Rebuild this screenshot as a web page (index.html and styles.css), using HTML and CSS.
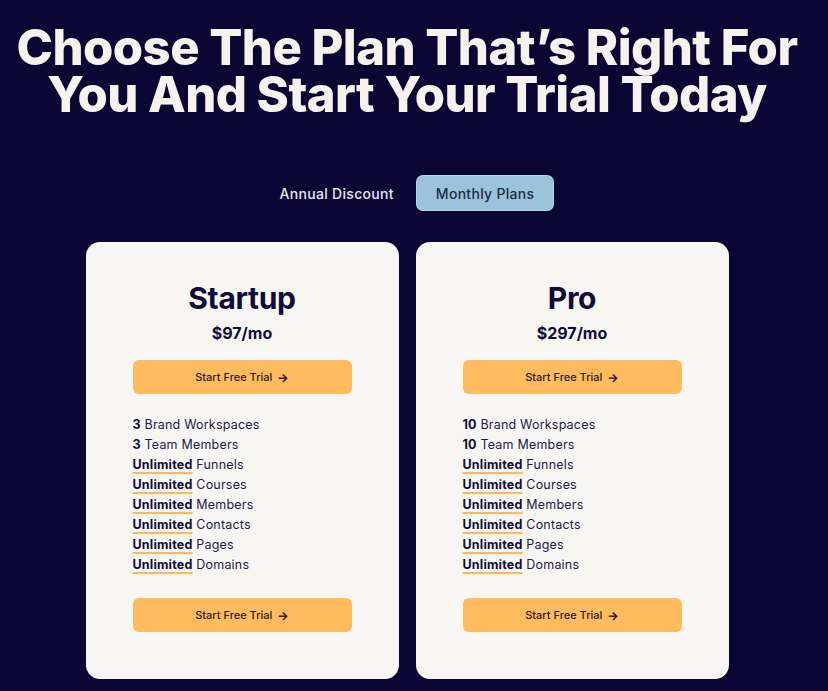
FILE: index.html
```html
<!DOCTYPE html>
<html lang="en">
<head>
<meta charset="UTF-8">
<meta name="viewport" content="width=device-width, initial-scale=1">
<title>Pricing Plans</title>
<link rel="stylesheet" href="styles.css">
</head>
<body>

  <!-- Heading -->
  <section class="pricing">
    <h1 class="title">Choose The Plan That’s Right For You And Start Your Trial Today</h1>

    <!-- Plan switch -->
    <div class="switch">
      <button class="switch-btn">Annual Discount</button>
      <button class="switch-btn active">Monthly Plans</button>
    </div>

    <!-- Cards -->
    <div class="cards">
      <div class="card">
        <h2 class="plan">Startup</h2>
        <div class="price">$97/mo</div>
        <a class="trial" href="#">Start Free Trial <span class="arrow">&#8594;</span></a>
        <ul class="features">
          <li><b>3</b> Brand Workspaces</li>
          <li><b>3</b> Team Members</li>
          <li><b class="unl">Unlimited</b> Funnels</li>
          <li><b class="unl">Unlimited</b> Courses</li>
          <li><b class="unl">Unlimited</b> Members</li>
          <li><b class="unl">Unlimited</b> Contacts</li>
          <li><b class="unl">Unlimited</b> Pages</li>
          <li><b class="unl">Unlimited</b> Domains</li>
        </ul>
        <a class="trial" href="#">Start Free Trial <span class="arrow">&#8594;</span></a>
      </div>

      <div class="card">
        <h2 class="plan">Pro</h2>
        <div class="price">$297/mo</div>
        <a class="trial" href="#">Start Free Trial <span class="arrow">&#8594;</span></a>
        <ul class="features">
          <li><b>10</b> Brand Workspaces</li>
          <li><b>10</b> Team Members</li>
          <li><b class="unl">Unlimited</b> Funnels</li>
          <li><b class="unl">Unlimited</b> Courses</li>
          <li><b class="unl">Unlimited</b> Members</li>
          <li><b class="unl">Unlimited</b> Contacts</li>
          <li><b class="unl">Unlimited</b> Pages</li>
          <li><b class="unl">Unlimited</b> Domains</li>
        </ul>
        <a class="trial" href="#">Start Free Trial <span class="arrow">&#8594;</span></a>
      </div>
    </div>
  </section>

</body>
</html>
```

FILE: styles.css
```css
body {
  margin: 0;
  background: #0b0534;
  color: #0f0b3a;
  font-family: "Inter", "Liberation Sans", sans-serif;
}

.pricing {
  padding: 24px 14px 0 0;
  display: flex;
  flex-direction: column;
  align-items: center;
}

.title {
  margin: 0;
  width: 814px;
  color: #f6f3ef;
  font-size: 49px;
  line-height: 47px;
  font-weight: 800;
  letter-spacing: -0.55px;
  text-align: center;
}

.switch {
  margin-top: 58px;
  display: flex;
  gap: 4px;
}

.switch-btn {
  padding: 0 19px;
  height: 34px;
  border: none;
  border-radius: 6px;
  background: transparent;
  color: #e9e6ee;
  font-family: "Inter", "Liberation Sans", sans-serif;
  font-size: 14px;
  font-weight: 500;
  letter-spacing: 0.3px;
  cursor: pointer;
}

.switch-btn.active {
  background: #9bc3da;
  color: #1a2a44;
  box-shadow: 0 0 0 1px #b6d6e8;
}

.cards {
  margin-top: 32px;
  display: flex;
  gap: 17px;
}

.card {
  width: 313px;
  box-sizing: border-box;
  padding: 38px 47px 47px;
  background: #f7f6f3;
  border-radius: 14px;
  display: flex;
  flex-direction: column;
}

.plan {
  margin: 0;
  font-size: 30px;
  line-height: 36px;
  font-weight: 700;
  text-align: center;
  letter-spacing: -0.3px;
}

.price {
  margin-top: 6px;
  font-size: 16px;
  line-height: 22px;
  font-weight: 700;
  text-align: center;
}

.trial {
  margin-top: 16px;
  height: 34px;
  border-radius: 6px;
  background: #ffbb5e;
  color: #2a1a22;
  font-size: 11px;
  font-weight: 500;
  text-decoration: none;
  display: flex;
  align-items: center;
  justify-content: center;
  gap: 5px;
}

.arrow {
  font-weight: 700;
  font-size: 12px;
}

.features {
  margin: 21px 0 23px;
  padding: 0;
  list-style: none;
  font-size: 12.5px;
  line-height: 20px;
  letter-spacing: 0.2px;
  color: #1c1a45;
}

.features b {
  font-weight: 700;
  color: #0f0b3a;
}

.features + .trial {
  margin-top: 0;
}

.unl {
  text-decoration: underline;
  text-decoration-color: #ffb957;
  text-decoration-thickness: 2px;
  text-underline-offset: 3px;
}
```
